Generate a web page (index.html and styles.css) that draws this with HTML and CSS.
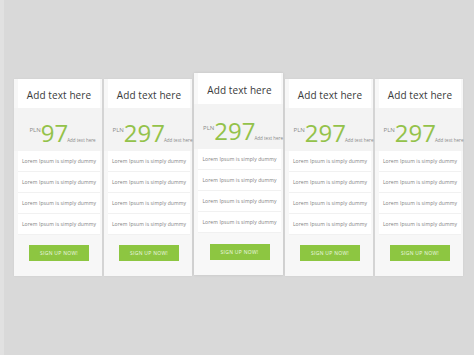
FILE: index.html
```html
<!DOCTYPE html>
<html>
<head>
<meta charset="utf-8">
<link rel="stylesheet" href="styles.css">
</head>
<body>
<div class="stage">
  <div class="plans">
    <div class="card">
      <div class="head">Add text here</div>
      <div class="price"><span class="cur">PLN</span><span class="num">97</span><span class="note">Add text here</span></div>
      <ul class="rows">
        <li>Lorem Ipsum is simply dummy</li>
        <li>Lorem Ipsum is simply dummy</li>
        <li>Lorem Ipsum is simply dummy</li>
        <li>Lorem Ipsum is simply dummy</li>
      </ul>
      <div class="foot"><span class="btn">SIGN UP NOW!</span></div>
    </div>
    <div class="card">
      <div class="head">Add text here</div>
      <div class="price"><span class="cur">PLN</span><span class="num">297</span><span class="note">Add text here</span></div>
      <ul class="rows">
        <li>Lorem Ipsum is simply dummy</li>
        <li>Lorem Ipsum is simply dummy</li>
        <li>Lorem Ipsum is simply dummy</li>
        <li>Lorem Ipsum is simply dummy</li>
      </ul>
      <div class="foot"><span class="btn">SIGN UP NOW!</span></div>
    </div>
    <div class="card featured">
      <div class="head">Add text here</div>
      <div class="price"><span class="cur">PLN</span><span class="num">297</span><span class="note">Add text here</span></div>
      <ul class="rows">
        <li>Lorem Ipsum is simply dummy</li>
        <li>Lorem Ipsum is simply dummy</li>
        <li>Lorem Ipsum is simply dummy</li>
        <li>Lorem Ipsum is simply dummy</li>
      </ul>
      <div class="foot"><span class="btn">SIGN UP NOW!</span></div>
    </div>
    <div class="card">
      <div class="head">Add text here</div>
      <div class="price"><span class="cur">PLN</span><span class="num">297</span><span class="note">Add text here</span></div>
      <ul class="rows">
        <li>Lorem Ipsum is simply dummy</li>
        <li>Lorem Ipsum is simply dummy</li>
        <li>Lorem Ipsum is simply dummy</li>
        <li>Lorem Ipsum is simply dummy</li>
      </ul>
      <div class="foot"><span class="btn">SIGN UP NOW!</span></div>
    </div>
    <div class="card">
      <div class="head">Add text here</div>
      <div class="price"><span class="cur">PLN</span><span class="num">297</span><span class="note">Add text here</span></div>
      <ul class="rows">
        <li>Lorem Ipsum is simply dummy</li>
        <li>Lorem Ipsum is simply dummy</li>
        <li>Lorem Ipsum is simply dummy</li>
        <li>Lorem Ipsum is simply dummy</li>
      </ul>
      <div class="foot"><span class="btn">SIGN UP NOW!</span></div>
    </div>
  </div>
</div>
</body>
</html>
```

FILE: styles.css
```css
html, body {
  margin: 0;
  padding: 0;
}
body {
  background: #d9d9d9;
  font-family: "Open Sans", "Liberation Sans", sans-serif;
  width: 474px;
  height: 355px;
  overflow: hidden;
}
.stage {
  height: 355px;
  border-left: 4px solid #e1e1e1;
  box-sizing: border-box;
}
.plans {
  display: flex;
  align-items: flex-end;
  gap: 2px;
  padding-left: 10px;
  height: 276px;
}
.card {
  width: 88px;
  background: #f7f7f7;
  box-shadow: 0 0 2px rgba(0, 0, 0, 0.06);
  display: flex;
  flex-direction: column;
  padding: 0 2px 0 4px;
  box-sizing: border-box;
}
.card.featured {
  width: 89px;
  margin-bottom: 1px;
  background: #f8f8f8;
  box-shadow: 0 0 3px rgba(0, 0, 0, 0.1);
}
.head {
  background: #fff;
  height: 29px;
  box-sizing: border-box;
  padding-top: 3px;
  display: flex;
  align-items: center;
  justify-content: center;
  font-size: 10px;
  letter-spacing: 0.1px;
  color: #3a3a3a;
  white-space: nowrap;
}
.featured .head {
  height: 31px;
}
.price {
  background: #f3f3f3;
  margin: 0 -2px 0 -4px;
  padding: 13px 0 6px 9px;
  display: flex;
  justify-content: center;
  align-items: baseline;
  white-space: nowrap;
}
.featured .price {
  padding-top: 15px;
}
.cur {
  align-self: flex-start;
  margin-top: 6px;
  font-size: 6px;
  line-height: 6px;
  color: #8a8a8a;
}
.num {
  font-size: 24px;
  line-height: 24px;
  color: #93c24a;
}
.note {
  font-size: 4.5px;
  color: #888;
  margin-left: -1px;
}
.rows {
  list-style: none;
  margin: 0;
  padding: 0;
}
.rows li {
  background: #fff;
  height: 21px;
  box-sizing: border-box;
  border-bottom: 1px solid #f1f1f1;
  display: flex;
  align-items: center;
  justify-content: center;
  font-size: 5px;
  letter-spacing: 0.1px;
  color: #808080;
  white-space: nowrap;
}
.foot {
  height: 41px;
  box-sizing: border-box;
  padding-top: 10px;
  display: flex;
  justify-content: center;
  align-items: flex-start;
}
.featured .foot {
  padding-top: 11px;
  height: 42px;
}
.btn {
  width: 60px;
  height: 16px;
  background: #8dc641;
  color: #eef7e2;
  font-size: 5px;
  letter-spacing: 0.3px;
  display: flex;
  align-items: center;
  justify-content: center;
}
```
